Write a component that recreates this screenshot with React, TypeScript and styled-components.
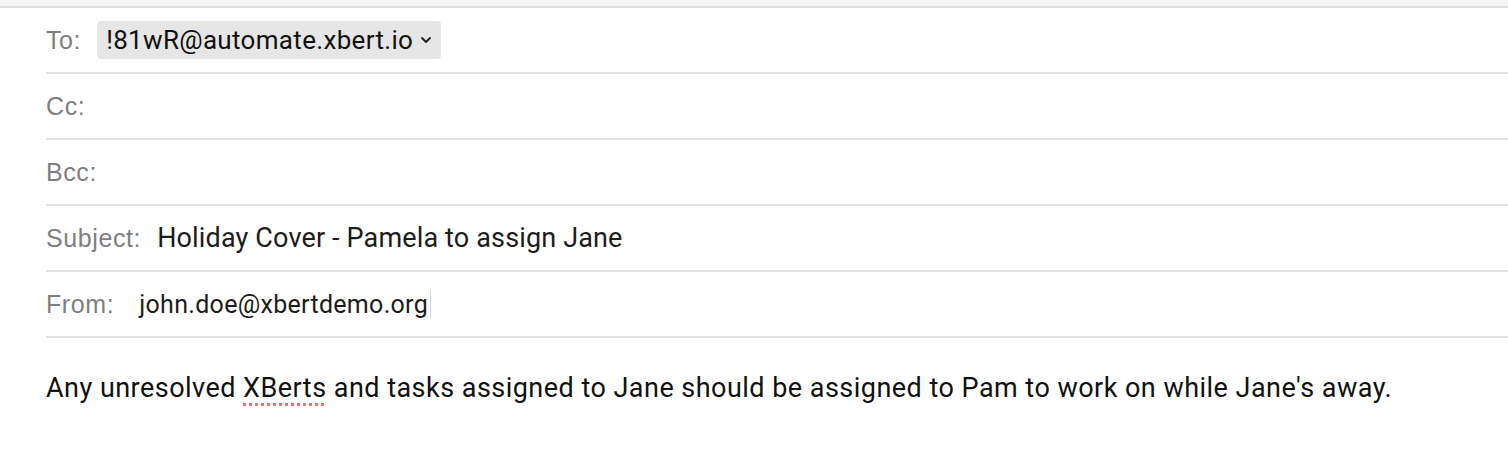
import styled, { createGlobalStyle } from "styled-components";

const Global = createGlobalStyle`
  html, body {
    margin: 0;
    padding: 0;
    background: #ffffff;
  }
  body {
    font-family: "Liberation Sans", Arial, sans-serif;
    -webkit-font-smoothing: antialiased;
  }
`;

const Window = styled.div`
  width: 100%;
  min-height: 462px;
  display: flex;
  flex-direction: column;
  background: #ffffff;
`;

const TopBar = styled.div`
  height: 6px;
  background: #f5f5f5;
  border-bottom: 2px solid #dedede;
`;

const Headers = styled.div`
  padding-left: 46px;
  display: flex;
  flex-direction: column;
`;

const Row = styled.div`
  height: 64px;
  border-bottom: 2px solid #e4e4e4;
  display: flex;
  align-items: center;
`;

const Label = styled.span<{ $gap: number }>`
  font-family: "Liberation Sans", Arial, sans-serif;
  font-size: 25px;
  letter-spacing: 0.6px;
  color: #7f7f7f;
  margin-right: ${({ $gap }) => $gap}px;
  white-space: nowrap;
`;

const Value = styled.span<{ $size: number; $track: number }>`
  font-family: Roboto, "Liberation Sans", sans-serif;
  font-size: ${({ $size }) => $size}px;
  letter-spacing: ${({ $track }) => $track}px;
  color: #1c1c1c;
  white-space: nowrap;
`;

const Chip = styled.span`
  display: inline-flex;
  align-items: center;
  gap: 7px;
  height: 38px;
  padding: 0 9px;
  border-radius: 4px;
  background: #e6e6e6;
  font-family: Roboto, "Liberation Sans", sans-serif;
  font-size: 26px;
  letter-spacing: 0.32px;
  color: #111111;
`;

const Caret = styled.span`
  display: inline-block;
  width: 1px;
  height: 28px;
  margin-left: 2px;
  background: #d4d4d4;
`;

const Body = styled.div`
  padding: 34px 46px 0;
  font-family: Roboto, "Liberation Sans", sans-serif;
  font-size: 27px;
  line-height: 32px;
  letter-spacing: 0.47px;
  color: #111111;
  white-space: nowrap;
`;

const Misspelled = styled.span`
  text-decoration: underline dotted #f26d6d;
  text-decoration-thickness: 3px;
  text-underline-offset: 6px;
`;

function Chevron() {
  return (
    <svg width="12" height="8" viewBox="0 0 12 8" fill="none">
      <path d="M2 2 L6 6 L10 2" stroke="#222" strokeWidth="1.9" strokeLinecap="round" strokeLinejoin="round" />
    </svg>
  );
}

export default function App() {
  return (
    <Window>
      <Global />
      <TopBar />
      <Headers>
        <Row>
          <Label $gap={16}>To:</Label>
          <Chip>
            !81wR@automate.xbert.io
            <Chevron />
          </Chip>
        </Row>
        <Row>
          <Label $gap={0}>Cc:</Label>
        </Row>
        <Row>
          <Label $gap={0}>Bcc:</Label>
        </Row>
        <Row>
          <Label $gap={16}>Subject:</Label>
          <Value $size={27} $track={0.15}>Holiday Cover - Pamela to assign Jane</Value>
        </Row>
        <Row>
          <Label $gap={25}>From:</Label>
          <Value $size={25} $track={0.3}>john.doe@xbertdemo.org</Value>
          <Caret />
        </Row>
      </Headers>
      <Body>
        Any unresolved <Misspelled>XBerts</Misspelled> and tasks assigned to Jane should be assigned to Pam to work on while Jane's away.
      </Body>
    </Window>
  );
}
